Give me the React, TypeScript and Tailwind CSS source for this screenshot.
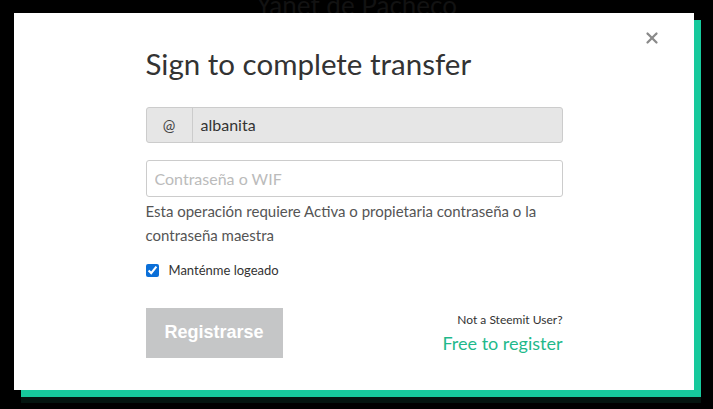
import { X } from "lucide-react"

const font = { fontFamily: "Lato, 'Noto Sans', sans-serif" }

export default function App() {
  return (
    <div className="relative h-[409px] w-[713px] overflow-hidden bg-black" style={font}>
      <p className="absolute left-0 right-0 top-[-14px] text-center font-['Lato'] text-[26px] text-[#121212]">
        Yanet de Pacheco
      </p>

      <div className="relative pl-[14px] pt-[13px]">
        <div className="relative h-[377px] w-[680px] bg-white shadow-[7px_7px_0_#16c99c,7px_13px_0_#04140f]">
          <button className="absolute right-[33px] top-[16px] text-[#8a8a8a]">
            <X className="h-[18px] w-[18px]" strokeWidth={3} />
          </button>

          <div className="mx-auto w-[417px] pt-[31px]">
            <h1 className="text-[29.5px] leading-[40px] text-[#333]">Sign to complete transfer</h1>

            <div className="mt-[23px] flex h-[36px] rounded-[3px] border border-[#ccc] bg-[#e6e6e6]">
              <span className="flex w-[46px] items-center justify-center border-r border-[#ccc] text-[15px] text-[#444]">
                @
              </span>
              <span className="flex items-center pl-[8px] text-[16px] text-[#333]">albanita</span>
            </div>

            <input
              className="mt-[17px] h-[37px] w-full rounded-[3px] border border-[#ccc] px-[8px] text-[16px] text-[#333] placeholder:text-[#bbb] focus:outline-none"
              placeholder="Contraseña o WIF"
            />

            <p className="mt-[2px] text-[15px] leading-[24px] text-[#555]">
              Esta operación requiere Activa o propietaria contraseña o la contraseña maestra
            </p>

            <label className="mt-[14px] flex items-center gap-[10px] text-[13px] text-[#333]">
              <input type="checkbox" defaultChecked className="h-[13px] w-[13px] accent-[#0b6fd8]" />
              Manténme logeado
            </label>

            <div className="mt-[27px] flex items-start justify-between">
              <button className="h-[50px] w-[137px] bg-[#c5c6c7] font-['Liberation_Sans'] text-[18px] font-bold text-white">
                Registrarse
              </button>
              <div className="pt-[3px] text-right">
                <p className="text-[12px] text-[#333]">Not a Steemit User?</p>
                <p className="mt-[1px] text-[18px] text-[#1fb98b]">Free to register</p>
              </div>
            </div>
          </div>
        </div>
      </div>
    </div>
  )
}
